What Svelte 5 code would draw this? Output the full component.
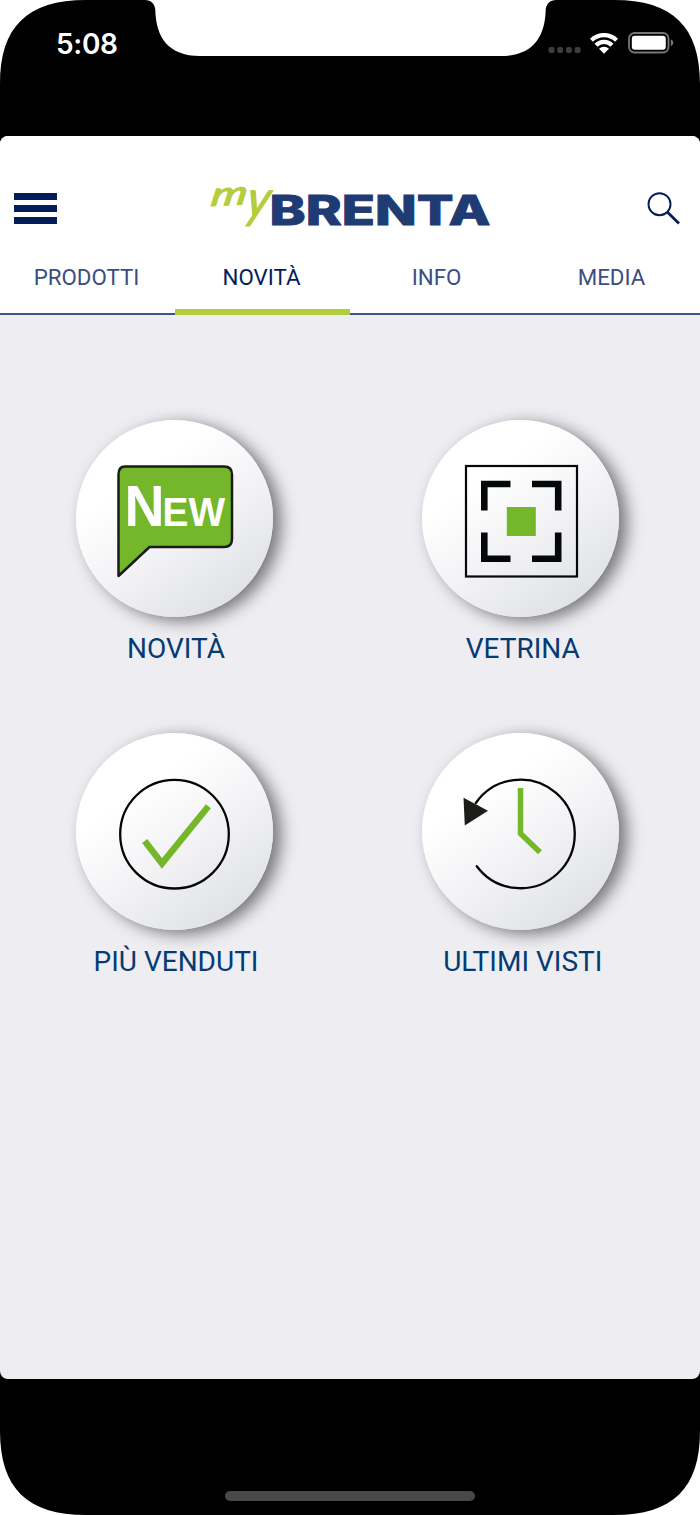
<script>
  const tabs = ['PRODOTTI', 'NOVITÀ', 'INFO', 'MEDIA'];
  let active = $state('NOVITÀ');
  const tiles = [
    { id: 'new', label: 'NOVITÀ' },
    { id: 'showcase', label: 'VETRINA' },
    { id: 'best', label: 'PIÙ VENDUTI' },
    { id: 'recent', label: 'ULTIMI VISTI' }
  ];
</script>

<div class="phone">
  <div class="status">
    <svg class="frame" width="700" height="150" viewBox="0 0 700 150" aria-hidden="true">
      <path d="M0 150V84C0 27 27 0 86 0H145C151 0 155 4 155.300 10C156 37 168 56 200 56H501C533 56 545 37 545.700 10C546 4 550 0 556 0H614C673 0 700 27 700 84V150Z" />
    </svg>
    <span class="time">5:08</span>
    <div class="indicators">
      <svg class="dots" width="33" height="8" viewBox="0 0 33 8" fill="#3d3d3d" aria-hidden="true">
        <rect x="0.500" y="1" width="6" height="6" rx="2" /><rect x="9.200" y="1" width="6" height="6" rx="2" />
        <rect x="17.900" y="1" width="6" height="6" rx="2" /><rect x="26.600" y="1" width="6" height="6" rx="2" />
      </svg>
      <svg class="wifi" width="28" height="21" viewBox="0 0 28 21" aria-hidden="true">
        <g fill="none" stroke="#fff" stroke-width="4.200">
          <path d="M1.400 7.200A18 18 0 0 1 26.600 7.200" />
          <path d="M6 12.200A11.500 11.500 0 0 1 22 12.200" />
        </g>
        <path d="M9 15.800A7.200 7.200 0 0 1 19 15.800L14 20.800Z" fill="#fff" />
      </svg>
      <svg width="46" height="22" viewBox="0 0 46 22" aria-hidden="true">
        <rect x="1" y="1" width="39.500" height="19.500" rx="5.500" fill="none" stroke="#777" stroke-width="1.800" />
        <rect x="3.800" y="3.800" width="34" height="14" rx="3" fill="#fff" />
        <path d="M42.800 7.300Q45.300 8.500 45.300 10.800Q45.300 13 42.800 14.200Z" fill="#777" />
      </svg>
    </div>
  </div>

  <div class="app">
    <header>
      <div class="bar">
        <button class="menu" aria-label="Menu"><i></i><i></i><i></i></button>
        <svg class="logo" width="284" height="56" viewBox="0 0 284 56">
          <g class="my">
            <text transform="translate(0 27) rotate(-3) skewX(-12)" font-size="33" textLength="36" lengthAdjust="spacingAndGlyphs">m</text>
            <text transform="translate(34.500 37.500) skewX(-10)" font-size="52" textLength="23" lengthAdjust="spacingAndGlyphs">y</text>
          </g>
          <text class="brenta" x="59.500" y="46.300" textLength="221" lengthAdjust="spacingAndGlyphs">BRENTA</text>
        </svg>
        <button class="search" aria-label="Cerca">
          <svg width="34" height="34" viewBox="0 0 34 34" fill="none" stroke="#031d5b">
            <circle cx="12.500" cy="12.200" r="11" stroke-width="1.900" />
            <path d="M20.300 20L32 31.500" stroke-width="2.700" />
          </svg>
        </button>
      </div>
      <nav>
        {#each tabs as tab}
          <button class:active={tab === active} onclick={() => (active = tab)}>{tab}</button>
        {/each}
      </nav>
    </header>

    <main>
      {#each tiles as tile}
        <div class="tile">
          <div class="disc">
            <svg width="198" height="198" viewBox="0 0 198 198">
              {#if tile.id === 'new'}
                <path d="M49 46.500H148Q156 46.500 156 54.500V119Q156 127 148 127H73.500L42.500 156V54.500Q42.500 46.500 49 46.500Z" fill="#74b72b" stroke="#1a1c18" stroke-width="2.500" stroke-linejoin="round" />
                <g class="new">
                  <text x="48.500" y="105.500" font-size="57" textLength="40" lengthAdjust="spacingAndGlyphs">N</text>
                  <text x="86.500" y="105.500" font-size="40" textLength="62.500" lengthAdjust="spacingAndGlyphs">EW</text>
                </g>
              {:else if tile.id === 'showcase'}
                <rect x="44" y="46" width="111" height="110.500" fill="none" stroke="#050808" stroke-width="2.200" />
                <g fill="none" stroke="#050808" stroke-width="6.600">
                  <path d="M88.500 64H62.300V90.500M110 64H136.200V90.500M62.300 112.500V138.700H88.500M136.200 112.500V138.700H110" />
                </g>
                <rect x="84.800" y="87" width="29" height="29" fill="#74b72b" />
              {:else if tile.id === 'best'}
                <circle cx="98.500" cy="101.200" r="54.300" fill="none" stroke="#050505" stroke-width="2.300" />
                <path d="M68.700 108L86 130.400L132.400 73.200" fill="none" stroke="#74b72b" stroke-width="6.500" />
              {:else}
                <path d="M53.800 70A54.300 54.300 0 1 1 54.800 133.200" fill="none" stroke="#050505" stroke-width="2.300" stroke-linecap="round" />
                <path d="M41.500 64.700L66 77.700L42.800 92.500Z" fill="#1d1d1b" />
                <path d="M98.500 55V100.500L118 119.300" fill="none" stroke="#74b72b" stroke-width="5.500" />
              {/if}
            </svg>
          </div>
          <span class="label">{tile.label}</span>
        </div>
      {/each}
    </main>
  </div>

  <footer>
    <svg class="frame" width="700" height="150" viewBox="0 0 700 150" aria-hidden="true">
      <path d="M0 0V66C0 123 27 150 86 150H614C673 150 700 123 700 66V0Z" />
    </svg>
    <div class="home"></div>
  </footer>
</div>

<style>
  :global(body) { margin: 0; background: #fff; }
  button { border: 0; padding: 0; background: none; font: inherit; color: inherit; }
  svg { display: block; }
  .phone { width: 700px; height: 1515px; display: flex; flex-direction: column; overflow: hidden; font-family: Roboto, sans-serif; }
  .status { position: relative; height: 135.500px; flex: none; display: flex; justify-content: space-between; box-sizing: border-box; padding: 27px 26px 0 56px; }
  .frame { position: absolute; left: 0; top: 0; }
  .time { position: relative; color: #fff; font: 600 28px/34px Inter, sans-serif; letter-spacing: -.3px; }
  .indicators { position: relative; display: flex; height: 32px; align-items: center; }
  .dots { margin: 14px 9px 0 0; }
  .wifi { margin-right: 10px; }
  .app { position: relative; z-index: 1; flex: 1; display: flex; flex-direction: column; background: #eeedf2; border-radius: 8px; overflow: hidden; }
  header { background: #fff; height: 179.500px; flex: none; display: flex; flex-direction: column; }
  .bar { height: 104.500px; flex: none; display: flex; align-items: flex-start; justify-content: space-between; box-sizing: border-box; padding: 43px 19px 0 14px; }
  .menu { width: 43px; margin-top: 14px; display: flex; flex-direction: column; gap: 5.200px; }
  .menu i { height: 7px; background: #031d5b; }
  .logo { margin-right: 1px; overflow: visible; }
  .my { font-family: Lato, sans-serif; font-style: italic; font-weight: 400; fill: #b3ce3d; stroke: #b3ce3d; stroke-width: 1.200px; stroke-linejoin: round; }
  .brenta { font: 800 41px Inter, sans-serif; fill: #1f3b73; stroke: #1f3b73; stroke-width: .9px; }
  .search { margin-top: 13px; }
  nav { flex: 1; display: grid; grid-template-columns: repeat(4, 1fr); border-bottom: 2px solid #3c548b; }
  nav button { margin-bottom: -2px; font-size: 22.300px; color: #3b4e82; box-sizing: border-box; border-bottom: 0 solid #b3ce3d; display: flex; justify-content: center; align-items: flex-start; padding: 24px 2px 3px 0; line-height: 26px; }
  nav button.active { color: #031d5b; border-bottom-width: 6px; }
  main { display: grid; grid-template-columns: 346px 346px; grid-auto-rows: 313px; padding: 104.500px 0 0 3px; }
  .tile { display: flex; flex-direction: column; align-items: center; }
  .disc { width: 197px; height: 197.500px; margin-right: 3px; border-radius: 50%; background: linear-gradient(145deg, #fff 30%, #f1f1f4 60%, #dadde1 95%); box-shadow: 8px 4px 16px rgba(0,0,0,.5); }
  .label { margin-top: 13.500px; font-size: 28px; line-height: 36px; color: #053b73; }
  .tile:nth-child(even) .label { padding-left: 1.500px; }
  .new { font-family: "Liberation Sans", sans-serif; font-weight: 700; fill: #fff; }
  footer { position: relative; height: 136px; flex: none; display: flex; justify-content: center; align-items: flex-end; }
  footer .frame { top: auto; bottom: 0; }
  .home { position: relative; width: 250px; height: 10px; margin: 0 0 14px; border-radius: 5px; background: #484848; }
</style>
